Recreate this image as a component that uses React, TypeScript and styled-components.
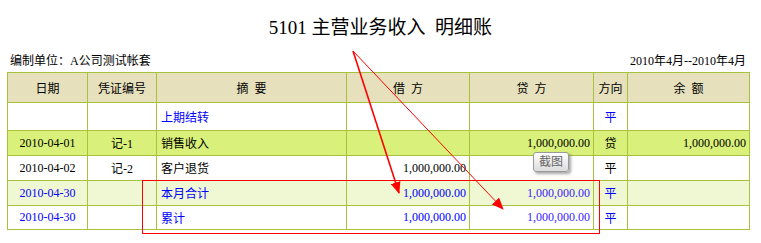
import React from "react";
import styled, { createGlobalStyle } from "styled-components";

const GlobalStyle = createGlobalStyle`
  html, body { margin: 0; padding: 0; background: #ffffff; }
  body { font-family: "Liberation Serif", "Noto Sans CJK SC", serif; color: #000; }
`;

const Page = styled.div`
  position: relative;
  width: 761px;
  height: 243px;
  overflow: hidden;
`;

const Title = styled.h1`
  margin: 0;
  padding-top: 16px;
  height: 24px;
  line-height: 24px;
  font-size: 19px;
  font-weight: normal;
  text-align: center;
  white-space: pre;
`;

const InfoBar = styled.div`
  display: flex;
  justify-content: space-between;
  align-items: center;
  margin-top: 13px;
  padding: 0 15px 0 10px;
  height: 16px;
  line-height: 16px;
  font-size: 12px;
`;

const Ledger = styled.table`
  margin: 3px 0 0 7px;
  width: 742px;
  border-collapse: collapse;
  table-layout: fixed;
  font-size: 12px;
`;

const HeadCell = styled.th<{ $w: number }>`
  box-sizing: border-box;
  width: ${(p) => p.$w}px;
  height: 30px;
  padding: 0;
  background: #e6e0bd;
  border: 1px solid #a9c23d;
  font-weight: normal;
  text-align: center;
  white-space: pre;
`;

type Tone = "white" | "lime" | "pale";
const toneBg: Record<Tone, string> = {
  white: "#ffffff",
  lime: "#d9f07a",
  pale: "#f0f8d3",
};

const Row = styled.tr<{ $tone: Tone; $h: number }>`
  background: ${(p) => toneBg[p.$tone]};
  height: ${(p) => p.$h}px;
`;

const Cell = styled.td<{ $align: "left" | "center" | "right"; $ink?: string }>`
  box-sizing: border-box;
  padding: 0 ${(p) => (p.$align === "right" ? "3px" : "0")} 0 ${(p) => (p.$align === "left" ? "4px" : "0")};
  border: 1px solid #a9c23d;
  text-align: ${(p) => p.$align};
  color: ${(p) => p.$ink ?? "#000000"};
  white-space: nowrap;
  overflow: hidden;
`;

const Annotations = styled.svg`
  position: absolute;
  left: 0;
  top: 0;
  pointer-events: none;
`;

const Tip = styled.div`
  position: absolute;
  left: 533px;
  top: 152px;
  width: 34px;
  height: 18px;
  border: 1px solid #9a9a9a;
  border-radius: 3px;
  background: linear-gradient(#ffffff, #dcdcdc);
  box-shadow: 2px 2px 3px rgba(0, 0, 0, 0.35);
  font-size: 12px;
  line-height: 18px;
  text-align: center;
  color: #666;
`;

const columns = [
  { label: "日期", w: 80 },
  { label: "凭证编号", w: 69 },
  { label: "摘  要", w: 190 },
  { label: "借  方", w: 123 },
  { label: "贷  方", w: 124 },
  { label: "方向", w: 34 },
  { label: "余  额", w: 122 },
];

const BLUE = "#0000ff";
const VIOLET = "#3a22ff";

type RowData = {
  tone: Tone;
  h: number;
  date: string;
  voucher: string;
  summary: string;
  debit: string;
  credit: string;
  dir: string;
  balance: string;
  total: boolean;
  dirBlue: boolean;
  summaryBlue: boolean;
};

const rows: RowData[] = [
  { tone: "white", h: 28, date: "", voucher: "", summary: "上期结转", debit: "", credit: "", dir: "平", balance: "", total: false, dirBlue: true, summaryBlue: true },
  { tone: "lime", h: 25, date: "2010-04-01", voucher: "记-1", summary: "销售收入", debit: "", credit: "1,000,000.00", dir: "贷", balance: "1,000,000.00", total: false, dirBlue: false, summaryBlue: false },
  { tone: "white", h: 25, date: "2010-04-02", voucher: "记-2", summary: "客户退货", debit: "1,000,000.00", credit: "", dir: "平", balance: "", total: false, dirBlue: false, summaryBlue: false },
  { tone: "pale", h: 25, date: "2010-04-30", voucher: "", summary: "本月合计", debit: "1,000,000.00", credit: "1,000,000.00", dir: "平", balance: "", total: true, dirBlue: true, summaryBlue: true },
  { tone: "white", h: 24, date: "2010-04-30", voucher: "", summary: "累计", debit: "1,000,000.00", credit: "1,000,000.00", dir: "平", balance: "", total: true, dirBlue: true, summaryBlue: true },
];

export default function App() {
  return (
    <Page>
      <GlobalStyle />
      <Title>{"5101 主营业务收入  明细账"}</Title>
      <InfoBar>
        <span>编制单位：A公司测试帐套</span>
        <span>2010年4月--2010年4月</span>
      </InfoBar>
      <Ledger>
        <thead>
          <tr>
            {columns.map((c) => (
              <HeadCell key={c.label} $w={c.w}>
                {c.label}
              </HeadCell>
            ))}
          </tr>
        </thead>
        <tbody>
          {rows.map((r, i) => (
            <Row key={i} $tone={r.tone} $h={r.h}>
              <Cell $align="center" $ink={r.total ? BLUE : undefined}>{r.date}</Cell>
              <Cell $align="center">{r.voucher}</Cell>
              <Cell $align="left" $ink={r.summaryBlue ? BLUE : undefined}>{r.summary}</Cell>
              <Cell $align="right" $ink={r.total ? BLUE : undefined}>{r.debit}</Cell>
              <Cell $align="right" $ink={r.total ? VIOLET : undefined}>{r.credit}</Cell>
              <Cell $align="center" $ink={r.dirBlue ? BLUE : undefined}>{r.dir}</Cell>
              <Cell $align="right">{r.balance}</Cell>
            </Row>
          ))}
        </tbody>
      </Ledger>
      <Annotations width={761} height={243} viewBox="0 0 761 243">
        <defs>
          <marker id="arrowhead" markerWidth="12" markerHeight="10" refX="11" refY="5" orient="auto" markerUnits="userSpaceOnUse">
            <path d="M0,0 L12,5 L0,10 z" fill="#ff0000" />
          </marker>
        </defs>
        <line x1="353" y1="51" x2="399" y2="193" stroke="#ff0000" strokeWidth="1.6" markerEnd="url(#arrowhead)" />
        <line x1="353" y1="51" x2="503" y2="209" stroke="#ff0000" strokeWidth="1" markerEnd="url(#arrowhead)" />
        <rect x="142.5" y="180.5" width="457" height="53" fill="none" stroke="#ff0000" strokeWidth="1" />
      </Annotations>
      <Tip>截图</Tip>
    </Page>
  );
}
